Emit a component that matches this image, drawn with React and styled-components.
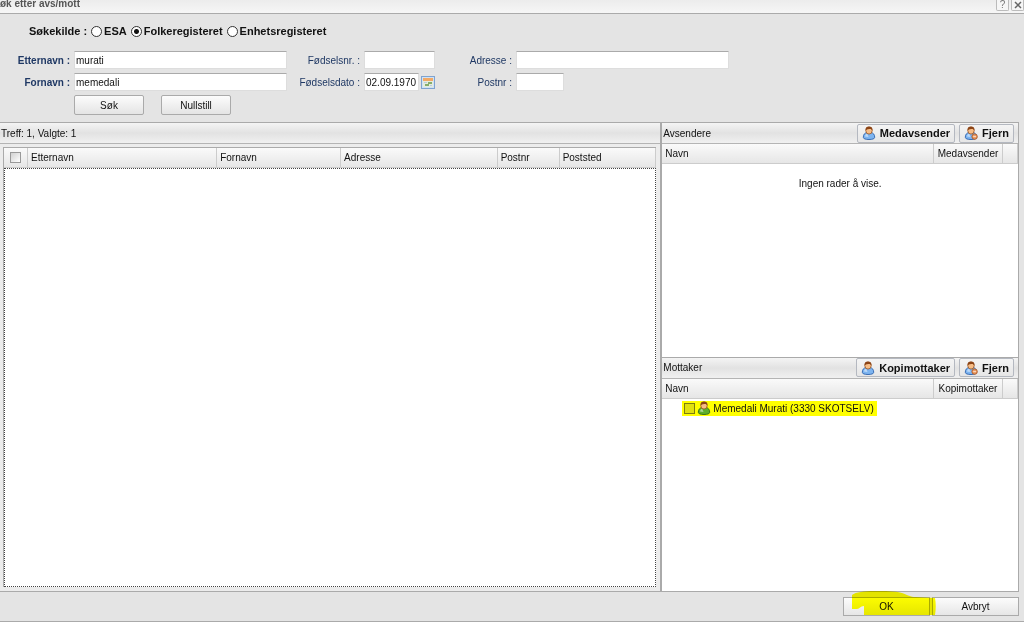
import React, { useState } from "react";
import styled, { createGlobalStyle } from "styled-components";

const SOURCES = [
  { id: "esa", name: "ESA" },
  { id: "folk", name: "Folkeregisteret" },
  { id: "enhet", name: "Enhetsregisteret" },
];

const COLUMNS = [
  { id: 1, title: "Etternavn", width: "29%" },
  { id: 2, title: "Fornavn", width: "19%" },
  { id: 3, title: "Adresse", width: "24%" },
  { id: 4, title: "Postnr", width: "62px" },
  { id: 5, title: "Poststed" },
];

const RECIPIENTS = [{ id: 1, name: "Memedali Murati (3330 SKOTSELV)" }];

function PersonIcon({ green, remove }) {
  const body = green ? "#5fae2c" : "#7db4f0";
  const edge = green ? "#2f6a14" : "#2d62ae";

  return (
    <svg width="14" height="14" viewBox="0 0 14 14" aria-hidden="true">
      <path
        d="M1.300 11.300C1.300 8.400 3 6.700 5 6.500h4c2 .2 3.700 1.900 3.700 4.800 0 1.500-2.400 2.200-5.700 2.200s-5.700-.7-5.700-2.200z"
        fill={body}
        stroke={edge}
        strokeWidth="0.900"
      />
      <path d="M3 10.500c.2-1.600 1-2.500 2.200-2.700l1.300 3.200z" fill="#fff" opacity="0.500" />
      <ellipse cx="7" cy="4.600" rx="3.200" ry="3.500" fill="#f7bd86" stroke="#9a5420" strokeWidth="0.800" />
      <path
        d="M3.600 4.700C3 1.800 4.600.4 7 .4s4 1.400 3.400 4.300C9.900 3.500 9 2.900 7.200 3.100c-1.700.1-3 .5-3.600 1.600z"
        fill="#8c4416"
      />
      {remove && <circle cx="10.600" cy="10.600" r="2.700" fill="#eb9a62" stroke="#a8501c" strokeWidth="0.800" />}
      {remove && <path d="M9.200 10.600H12" stroke="#fbe3d0" strokeWidth="0.900" />}
    </svg>
  );
}

function CalendarIcon() {
  return (
    <svg width="14" height="13" viewBox="0 0 14 13" aria-hidden="true">
      <rect x="0.500" y="0.500" width="13" height="12" fill="#cfe2f6" stroke="#7fa3cf" />
      <rect x="2" y="2" width="10" height="3" fill="#f2a965" />
      <rect x="2" y="5" width="10" height="6" fill="#e4ecdc" />
      <path d="M7 6h4v2H7zM4 8h4v2H4z" fill="#86ad6c" />
      <path d="M3 6h3v1H3zM9 9h2v1H9z" fill="#b9cbdc" />
    </svg>
  );
}

function PartyPanel({ title, action, column, children }) {
  return (
    <Panel>
      <PanelBar>
        <PanelTitle>{title}</PanelTitle>
        <ActionButton type="button">
          <PersonIcon />
          {action}
        </ActionButton>
        <ActionButton type="button">
          <PersonIcon remove />
          Fjern
        </ActionButton>
      </PanelBar>
      <Table>
        <thead>
          <tr>
            <HeadCell>Navn</HeadCell>
            <HeadCell $width="69px" $center>
              {column}
            </HeadCell>
            <HeadCell $width="15px" />
          </tr>
        </thead>
        <tbody>{children}</tbody>
      </Table>
    </Panel>
  );
}

function App() {
  const [source, setSource] = useState("folk");

  return (
    <>
      <GlobalStyle />
      <Dialog>
        <TitleBar>
          <Title>øk etter avs/mott</Title>
          <TitleButton type="button" aria-label="Hjelp">
            ?
          </TitleButton>
          <TitleButton type="button" aria-label="Lukk">
            <svg width="8" height="8" viewBox="0 0 8 8">
              <path d="M1 1l6 6M7 1L1 7" stroke="#666" strokeWidth="1.500" />
            </svg>
          </TitleButton>
        </TitleBar>

        <Search onSubmit={e => e.preventDefault()}>
          <Sources role="radiogroup" aria-labelledby="kilde">
            <span id="kilde">Søkekilde :</span>
            {SOURCES.map(item => (
              <SourceLabel key={item.id}>
                <Radio
                  type="radio"
                  name="kilde"
                  checked={source === item.id}
                  onChange={() => setSource(item.id)}
                />
                {item.name}
              </SourceLabel>
            ))}
          </Sources>
          <Fields>
            <Label htmlFor="etternavn" $bold>
              Etternavn :
            </Label>
            <Input id="etternavn" defaultValue="murati" />
            <Label htmlFor="fnr">Fødselsnr. :</Label>
            <Input id="fnr" />
            <Label htmlFor="adresse">Adresse :</Label>
            <Input id="adresse" />

            <Label htmlFor="fornavn" $bold>
              Fornavn :
            </Label>
            <Input id="fornavn" defaultValue="memedali" />
            <Label htmlFor="fdato">Fødselsdato :</Label>
            <DateField>
              <Input id="fdato" defaultValue="02.09.1970" $width="55px" />
              <IconButton type="button" aria-label="Velg dato">
                <CalendarIcon />
              </IconButton>
            </DateField>
            <Label htmlFor="postnr">Postnr :</Label>
            <Input id="postnr" $width="48px" />
          </Fields>
          <SearchButtons>
            <Button type="submit">Søk</Button>
            <Button type="reset">Nullstill</Button>
          </SearchButtons>
        </Search>

        <Content>
          <Results>
            <PanelBar>
              <PanelTitle>Treff: 1, Valgte: 1</PanelTitle>
            </PanelBar>
            <Grid>
              <Table>
                <thead>
                  <tr>
                    <HeadCell $width="24px" $check>
                      <CheckBox type="checkbox" aria-label="Velg alle" />
                    </HeadCell>
                    {COLUMNS.map(col => (
                      <HeadCell key={col.id} $width={col.width}>
                        {col.title}
                      </HeadCell>
                    ))}
                  </tr>
                </thead>
              </Table>
              <GridBody />
            </Grid>
          </Results>
          <Parties>
            <PartyPanel title="Avsendere" action="Medavsender" column="Medavsender">
              <tr>
                <EmptyCell colSpan={3}>Ingen rader å vise.</EmptyCell>
              </tr>
            </PartyPanel>
            <PartyPanel title="Mottaker" action="Kopimottaker" column="Kopimottaker">
              {RECIPIENTS.map(person => (
                <tr key={person.id}>
                  <PersonCell colSpan={3}>
                    <Marked>
                      <CheckBox type="checkbox" $marked />
                      <PersonIcon green />
                      {person.name}
                    </Marked>
                  </PersonCell>
                </tr>
              ))}
            </PartyPanel>
          </Parties>
        </Content>

        <Footer>
          <FooterButton type="button">
            OK
            <Marker viewBox="0 0 84 26" aria-hidden="true">
              <path
                d="M0 5C4 2 12 1 22 1c12 0 20 0 28 2 6 2 8 4 14 4l19 1c1 5 1 11 0 17H12l0-9c-4 0-4 3-7 3H0z"
                fill="#ffff00"
              />
            </Marker>
          </FooterButton>
          <FooterButton type="button">Avbryt</FooterButton>
        </Footer>
      </Dialog>
    </>
  );
}

export default App;

const GlobalStyle = createGlobalStyle`
  * {
    box-sizing: border-box;
  }
  body {
    margin: 0;
    background: #e4e4e4;
  }
  body, button, input {
    font-family: "Liberation Sans", Arial, sans-serif;
    font-size: 10px;
    color: #111;
  }
`;

const Dialog = styled.div`
  display: flex;
  flex-direction: column;
  min-height: 100vh;
  border-bottom: 1px solid #aaa;
`;

const TitleBar = styled.header`
  display: flex;
  align-items: flex-start;
  gap: 2px;
  height: 14px;
  background: linear-gradient(#ececec, #f6f6f6);
  border-bottom: 1px solid #aaa;
`;

const Title = styled.h1`
  flex: 1;
  margin: 0;
  font-size: 10px;
  line-height: 8px;
  color: #555;
`;

const TitleButton = styled.button`
  display: flex;
  align-items: center;
  justify-content: center;
  width: 13px;
  height: 11px;
  padding: 0;
  line-height: 8px;
  color: #777;
  background: #f6f6f6;
  border: 1px solid #bbb;
  border-top: none;
  border-radius: 0 0 2px 2px;
`;

const Search = styled.form`
  padding: 9px 0 7px;
`;

const Sources = styled.div`
  display: flex;
  align-items: center;
  gap: 4px;
  height: 16px;
  padding-left: 29px;
  font-size: 11px;
  font-weight: bold;
`;

const SourceLabel = styled.label`
  display: flex;
  align-items: center;
  gap: 2px;
`;

const Radio = styled.input`
  appearance: none;
  width: 11px;
  height: 11px;
  margin: 0;
  border: 1px solid #333;
  border-radius: 50%;
  background: #fff;

  &:checked {
    background: radial-gradient(#111 0 2px, #fff 3px);
  }
`;

const Fields = styled.div`
  display: grid;
  grid-template-columns: 70px 213px 69px 71px 73px 213px;
  gap: 4px;
  align-items: center;
  margin-top: 12px;
`;

const Label = styled.label`
  text-align: right;
  white-space: nowrap;
  color: #1f3864;
  font-weight: ${({ $bold }) => ($bold ? "bold" : "normal")};
`;

const Input = styled.input`
  width: ${({ $width }) => $width || "100%"};
  height: 18px;
  padding: 0 1px;
  background: #fff;
  border: 1px solid #ddd;
  border-top-color: #aaa;
  border-radius: 0;
`;

const DateField = styled.div`
  display: flex;
  align-items: center;
  gap: 2px;
`;

const IconButton = styled.button`
  display: flex;
  padding: 0;
  background: none;
  border: none;
`;

const SearchButtons = styled.div`
  display: flex;
  gap: 17px;
  margin: 4px 0 0 74px;
`;

const Button = styled.button`
  width: 70px;
  height: 20px;
  padding: 0;
  background: linear-gradient(#fcfcfc, #e4e4e4);
  border: 1px solid #aaa;
  border-radius: 2px;
`;

const Content = styled.main`
  flex: 1;
  display: grid;
  grid-template-columns: 24fr 13fr;
  margin-right: 5px;
  border: solid #aaa;
  border-width: 1px 1px 1px 0;
`;

const Results = styled.section`
  display: flex;
  flex-direction: column;
  background: #ececec;
`;

const Parties = styled.div`
  display: flex;
  flex-direction: column;
  border-left: 2px solid #aaa;
`;

const Panel = styled.section`
  flex: 1;
  background: #fff;

  & + & {
    border-top: 1px solid #aaa;
  }
`;

const PanelBar = styled.div`
  display: flex;
  align-items: center;
  gap: 4px;
  height: 21px;
  padding: 0 4px 0 1px;
  background: linear-gradient(#f4f4f4, #e2e2e2 50%, #f0f0f0);
  border-bottom: 1px solid #b4b4b4;
`;

const PanelTitle = styled.h2`
  flex: 1;
  margin: 0;
  font-size: 10px;
  font-weight: normal;
`;

const ActionButton = styled.button`
  display: flex;
  align-items: center;
  gap: 4px;
  height: 19px;
  padding: 0 4px;
  font-size: 11px;
  font-weight: bold;
  background: linear-gradient(#f4f4f4, #e6e6e6);
  border: 1px solid #b4b8c0;
  border-radius: 2px;
`;

const Grid = styled.div`
  flex: 1;
  display: flex;
  flex-direction: column;
  margin: 3px 4px 4px 3px;
  border: solid #aaa;
  border-width: 1px 0 0 1px;
`;

const GridBody = styled.div`
  flex: 1;
  background: #fff;
  border: 1px dotted #444;
`;

const Table = styled.table`
  width: 100%;
  table-layout: fixed;
  border-collapse: separate;
  border-spacing: 0;
`;

const HeadCell = styled.th`
  width: ${({ $width }) => $width || "auto"};
  height: 20px;
  padding: ${({ $check }) => ($check ? "0 0 0 6px" : "0 3px")};
  font-weight: normal;
  text-align: ${({ $center }) => ($center ? "center" : "left")};
  white-space: nowrap;
  background: linear-gradient(#fafafa, #e6e6e6);
  border-right: 1px solid #ccc;
  border-bottom: 1px solid #ccc;
`;

const EmptyCell = styled.td`
  padding: 14px 0;
  text-align: center;
`;

const PersonCell = styled.td`
  padding: 2px 0 0 20px;
`;

const Marked = styled.label`
  display: inline-flex;
  align-items: center;
  gap: 2px;
  height: 15px;
  padding: 0 3px 0 2px;
  background: #ffff00;
`;

const CheckBox = styled.input`
  appearance: none;
  display: block;
  width: 11px;
  height: 11px;
  margin: 0;
  background: ${({ $marked }) => ($marked ? "#e0e010" : "linear-gradient(135deg, #d0d0d0, #fff)")};
  border: 1px solid ${({ $marked }) => ($marked ? "#7c7c10" : "#999")};

  &:checked {
    background: #555;
  }
`;

const Footer = styled.footer`
  display: flex;
  justify-content: flex-end;
  gap: 2px;
  padding: 5px 5px 5px 0;
`;

const FooterButton = styled.button`
  position: relative;
  width: 87px;
  height: 19px;
  padding: 0;
  background: linear-gradient(#fcfcfc, #e6e6e6);
  border: 1px solid #aaa;
`;

/* highlighter stroke over the button */
const Marker = styled.svg`
  position: absolute;
  z-index: 1;
  left: 8px;
  top: -8px;
  width: 84px;
  height: 26px;
  mix-blend-mode: multiply;
  pointer-events: none;
`;
